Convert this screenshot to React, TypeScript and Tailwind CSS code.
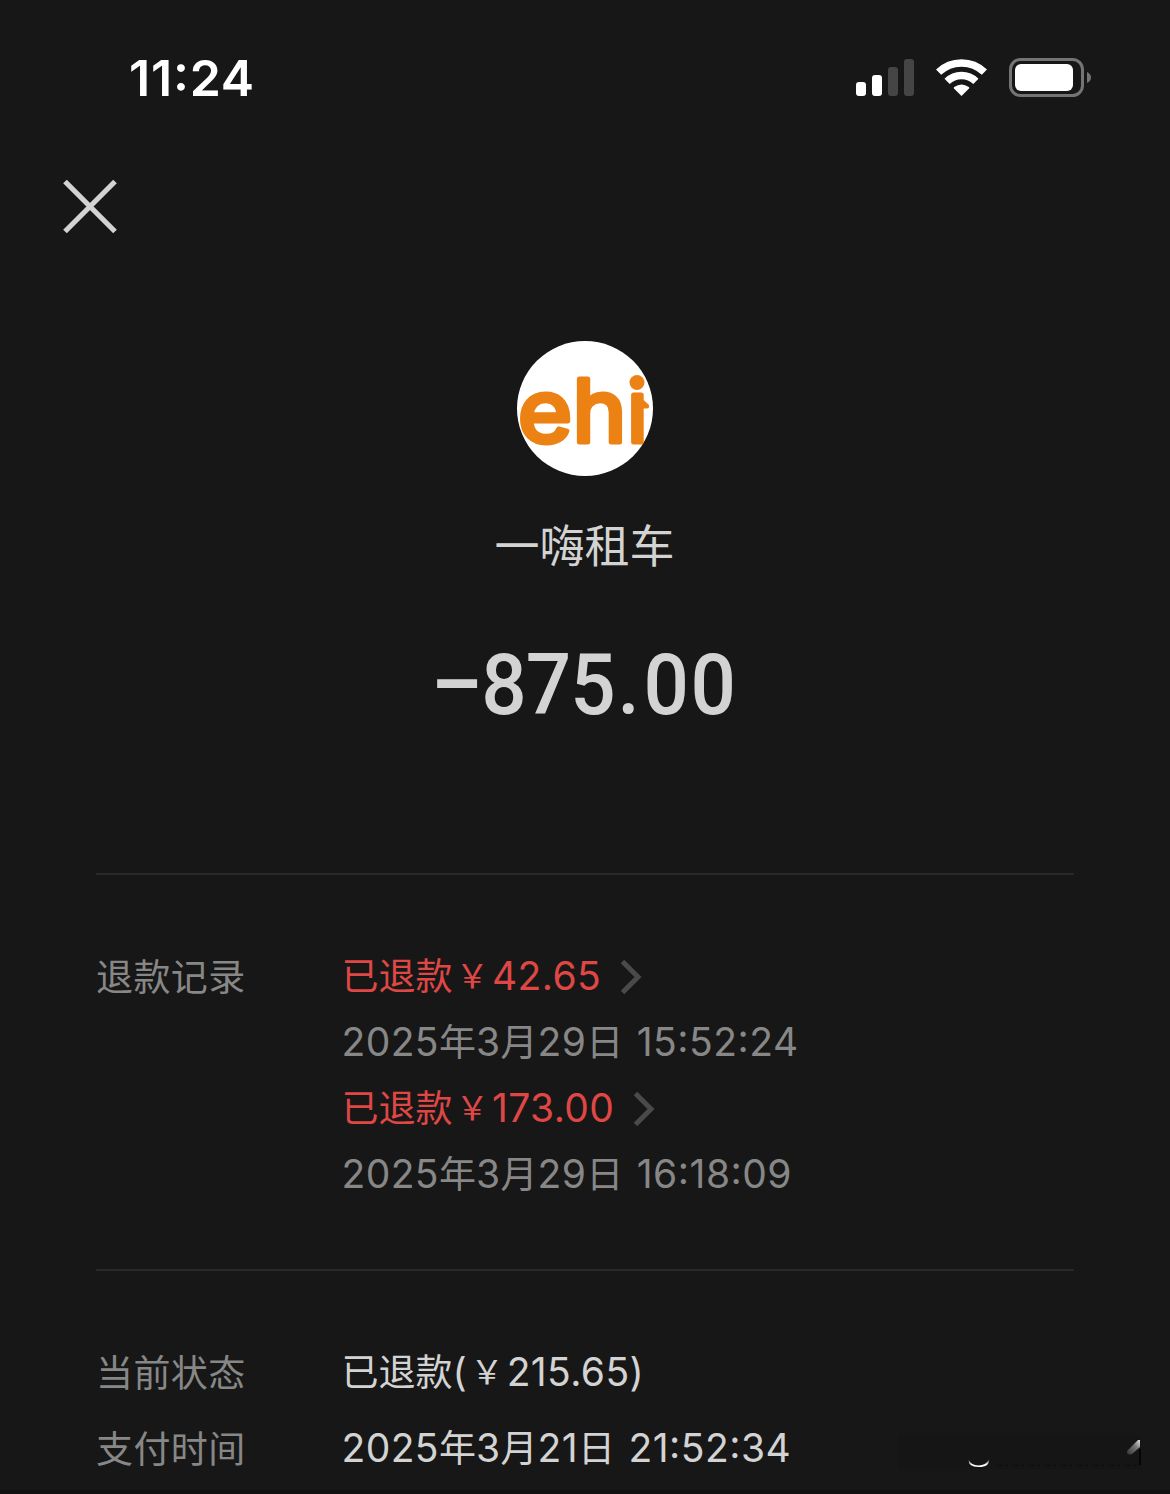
import React from "react";

const refunds = [
  { amount: "已退款￥42.65", time: "2025年3月29日 15:52:24" },
  { amount: "已退款￥173.00", time: "2025年3月29日 16:18:09" },
];

// Chinese runs and digit runs use different families and sizes
const MixedText = ({ text }: { text: string }) => {
  const runs = text.split(/([\u4e00-\u9fff]+|￥)/).filter(Boolean);
  return (
    <span className="whitespace-pre">
      {runs.map((run, i) => {
        if (run === "￥") {
          return (
            <span key={i} className="relative -top-0.5 inline-block w-[39.5px] text-center font-['Noto_Sans_CJK_SC',sans-serif] text-[33px] leading-none">
              ￥
            </span>
          );
        }
        if (/[\u4e00-\u9fff]/.test(run)) {
          return (
            <span key={i} className="font-['Noto_Sans_CJK_SC',sans-serif] text-[37px] leading-none">
              {run}
            </span>
          );
        }
        // clock part, set a little wider than the date
        if (run.startsWith(" ")) {
          return (
            <span key={i} className="font-['Inter',sans-serif] text-[39px] leading-none tracking-[0.5px] [word-spacing:2px] [font-feature-settings:'calt'_1]">
              {run}
            </span>
          );
        }
        return (
          <span key={i} className="font-['Inter',sans-serif] text-[39px] leading-none tracking-[0.4px]">
            {run}
          </span>
        );
      })}
    </span>
  );
};

const StatusBar = () => (
  <div className="flex h-[156px] items-start justify-between pl-[129px] pr-[78px]">
    <span className="mt-[48px] font-['Inter',sans-serif] text-[50px] font-semibold leading-[60px] tracking-[0.8px] text-white [font-feature-settings:'calt'_1]">
      11:24
    </span>
    <div className="mt-[56px] flex items-center">
      <svg className="h-[42px] w-[60px]" viewBox="0 0 60 42">
        <rect x="1" y="26" width="10" height="14" rx="3" fill="#fff" />
        <rect x="17" y="19" width="10" height="21" rx="3" fill="#fff" />
        <rect x="33" y="11" width="10" height="29" rx="3" fill="#454545" />
        <rect x="49" y="3" width="10" height="37" rx="3" fill="#454545" />
      </svg>
      <svg className="ml-[20px] h-[42px] w-[54px]" viewBox="0 0 54 42">
        <g fill="none" stroke="#fff" strokeWidth="7.4">
          <path d="M3.6 16.2A33 33 0 0 1 49.4 16.2" />
          <path d="M12.1 25.4A20.5 20.5 0 0 1 40.9 25.4" />
        </g>
        <path d="M26.5 40L19 32.4Q18.4 31.7 19.2 31Q26.5 26 33.8 31Q34.6 31.7 34 32.4Z" fill="#fff" />
      </svg>
      <svg className="ml-[19px] h-[42px] w-[84px]" viewBox="0 0 84 42">
        <rect x="2.5" y="3.5" width="72" height="36" rx="10" fill="none" stroke="#747474" strokeWidth="3" />
        <rect x="7" y="8" width="58" height="27" rx="6" fill="#fff" />
        <path d="M79 16Q83 18 83 21.5Q83 25 79 27Z" fill="#747474" />
      </svg>
    </div>
  </div>
);

const MerchantLogo = () => (
  <svg className="size-[136px]" viewBox="0 0 136 136">
    <ellipse cx="68" cy="67.5" rx="68" ry="67.5" fill="#fff" />
    <g
      className="font-['Inter',sans-serif] text-[86px] font-normal"
      fill="#ec8214"
      stroke="#ec8214"
      strokeWidth="5"
      strokeLinejoin="round"
    >
      <text x="1" y="101" textLength="54" lengthAdjust="spacingAndGlyphs">e</text>
      <text x="55.5" y="101" textLength="54" lengthAdjust="spacingAndGlyphs">h</text>
      <text x="110" y="101">ı</text>
    </g>
    <circle cx="120" cy="41.5" r="7.5" fill="#ec8214" />
    <path d="M120 53L131.5 63.5Q133.5 67 130 67.5H122Z" fill="#ec8214" />
  </svg>
);

const Chevron = () => (
  <svg className="h-[36px] w-[24px]" viewBox="0 0 24 36">
    <path d="M2.5 2.5L18 18L2.5 33.5" fill="none" stroke="#4a4a4a" strokeWidth="5" />
  </svg>
);

const Row = ({ label, value }: { label: string; value: string }) => (
  <div className="flex h-[76px] items-center">
    <span className="w-[245.5px] pt-0.5 tracking-[0.4px] text-[#878787]">
      <MixedText text={label} />
    </span>
    <span className="text-[#d3d3d3]">
      <MixedText text={value} />
    </span>
  </div>
);

// What is left of a wiped-out mark in the corner
const Smudge = () => (
  <svg className="absolute right-[25px] bottom-[15px] h-[44px] w-[252px]" viewBox="0 0 252 44">
    <defs>
      <linearGradient id="streak" x1="0" y1="1" x2="1" y2="0">
        <stop offset="0" stopColor="#333" />
        <stop offset="0.6" stopColor="#777" />
        <stop offset="1" stopColor="#ddd" />
      </linearGradient>
      <linearGradient id="arc" x1="0" y1="0" x2="0" y2="1">
        <stop offset="0" stopColor="#171717" />
        <stop offset="0.7" stopColor="#fff" />
      </linearGradient>
    </defs>
    <rect x="5" y="4" width="243" height="34" rx="4" fill="#151515" />
    <path d="M75.5 28Q75 36 85.5 36Q97 36 96 28Q93 34.5 85.5 34.5Q78 34.5 75.5 28Z" fill="url(#arc)" />
    <path d="M234 20L245 9H247V16L239 23Q234 25 234 20Z" fill="url(#streak)" />
    <path d="M247 18V34" stroke="#000" strokeWidth="1.5" />
    <path d="M105 34.5H246" stroke="#0d0d0d" strokeDasharray="5 3 2 6" />
  </svg>
);

export default function App() {
  return (
    <div className="relative flex h-[1494px] w-[1170px] flex-col overflow-hidden border-b-4 border-[#111111] bg-[#171717]">
      <StatusBar />
      <div className="h-[184px] pl-[60px] pt-[20px]">
        <svg className="size-[60px]" viewBox="0 0 60 60">
          <path d="M5 5.5L55 55.5M55 5.5L5 55.5" stroke="#d3d3d3" strokeWidth="5.2" />
        </svg>
      </div>

      <div className="flex h-[533px] flex-col items-center pt-px">
        <MerchantLogo />
        <h1 className="mt-[34px] mr-px font-['Noto_Sans_CJK_SC',sans-serif] text-[45px] font-normal leading-[66px] text-[#d3d3d3]">
          一嗨租车
        </h1>
        <p className="mt-[58px] ml-px scale-x-93 whitespace-nowrap font-['Roboto',sans-serif] text-[86px] font-medium leading-[100px] text-[#d3d3d3]">
          <span className="mr-[2px] inline-block scale-x-120 scale-y-110">−</span>
          <span className="tracking-[-1px]">875</span>
          <span className="mr-[4px] ml-[3px]">.</span>
          <span className="tracking-[1.5px]">00</span>
        </p>
      </div>

      <div className="mx-[96px] flex h-[396px] border-t-2 border-[#292929] pt-[68px]">
        <div className="flex h-[66px] w-[245.5px] items-center pt-0.5 tracking-[0.4px] text-[#878787]">
          <MixedText text="退款记录" />
        </div>
        <div>
          {refunds.map((item) => (
            <div key={item.time}>
              <div className="flex h-[66px] items-center text-[#df4745]">
                <MixedText text={item.amount} />
                <span className="ml-[19px] pt-px">
                  <Chevron />
                </span>
              </div>
              <div className="flex h-[66px] items-center text-[#878787]">
                <MixedText text={item.time} />
              </div>
            </div>
          ))}
        </div>
      </div>

      <div className="mx-[96px] border-t-2 border-[#292929] pt-[63px]">
        <Row label="当前状态" value="已退款(￥215.65)" />
        <Row label="支付时间" value="2025年3月21日 21:52:34" />
      </div>
      <Smudge />
    </div>
  );
}
